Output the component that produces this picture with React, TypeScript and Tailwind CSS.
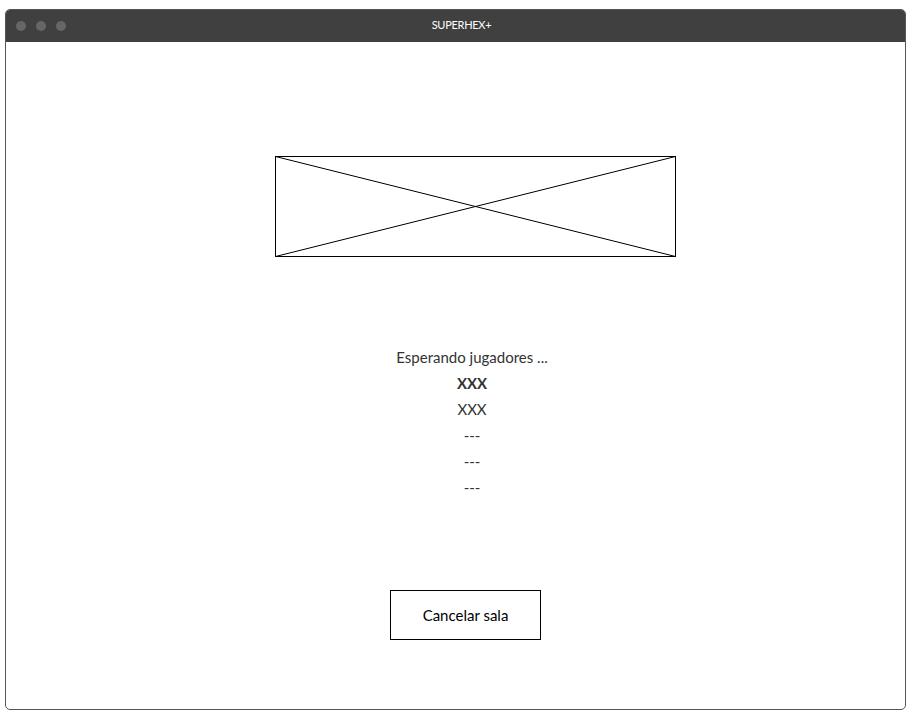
import React from "react";

const players = [
  { name: "XXX", bold: true },
  { name: "XXX", bold: false },
  { name: "---", bold: false },
  { name: "---", bold: false },
  { name: "---", bold: false },
];

const ImagePlaceholder: React.FC = () => (
  <svg width="401" height="101" viewBox="0 0 401 101" className="block">
    <rect x="0.5" y="0.5" width="400" height="100" fill="#fff" stroke="#000" strokeWidth="1" />
    <line x1="0.5" y1="0.5" x2="400.5" y2="100.5" stroke="#000" strokeWidth="1" />
    <line x1="0.5" y1="100.5" x2="400.5" y2="0.5" stroke="#000" strokeWidth="1" />
  </svg>
);

export default function App() {
  return (
    <div className="w-[909px] h-[717px] bg-white pt-[9px] pl-[5px]" style={{ fontFamily: "Lato, 'Open Sans', sans-serif" }}>
      <div className="w-[901px] h-[701px] flex flex-col rounded-[5px] border border-[#555] overflow-hidden">
        {/* Title bar */}
        <div className="h-[33px] -mx-px -mt-px bg-[#404040] rounded-t-[5px] flex items-center relative">
          <div className="flex gap-[10px] pl-[11px]">
            <span className="w-[10px] h-[10px] rounded-full bg-[#666]" />
            <span className="w-[10px] h-[10px] rounded-full bg-[#666]" />
            <span className="w-[10px] h-[10px] rounded-full bg-[#666]" />
          </div>
          <span className="absolute left-[12px] right-0 text-center text-[11px] text-white tracking-tight">SUPERHEX+</span>
        </div>

        {/* Body */}
        <div className="flex flex-col items-start">
          <div className="ml-[269px] mt-[114px]">
            <ImagePlaceholder />
          </div>

          <div className="ml-[269px] w-[394px] mt-[87px] flex flex-col items-center text-[15px] leading-[26px] text-[#333]">
            <span>Esperando jugadores ...</span>
            {players.map((p, i) => (
              <span key={i} className={p.bold ? "font-bold" : ""}>
                {p.name}
              </span>
            ))}
          </div>

          <button className="ml-[384px] mt-[90px] w-[151px] h-[50px] border border-black bg-white text-[15px] text-black">
            Cancelar sala
          </button>
        </div>
      </div>
    </div>
  );
}
